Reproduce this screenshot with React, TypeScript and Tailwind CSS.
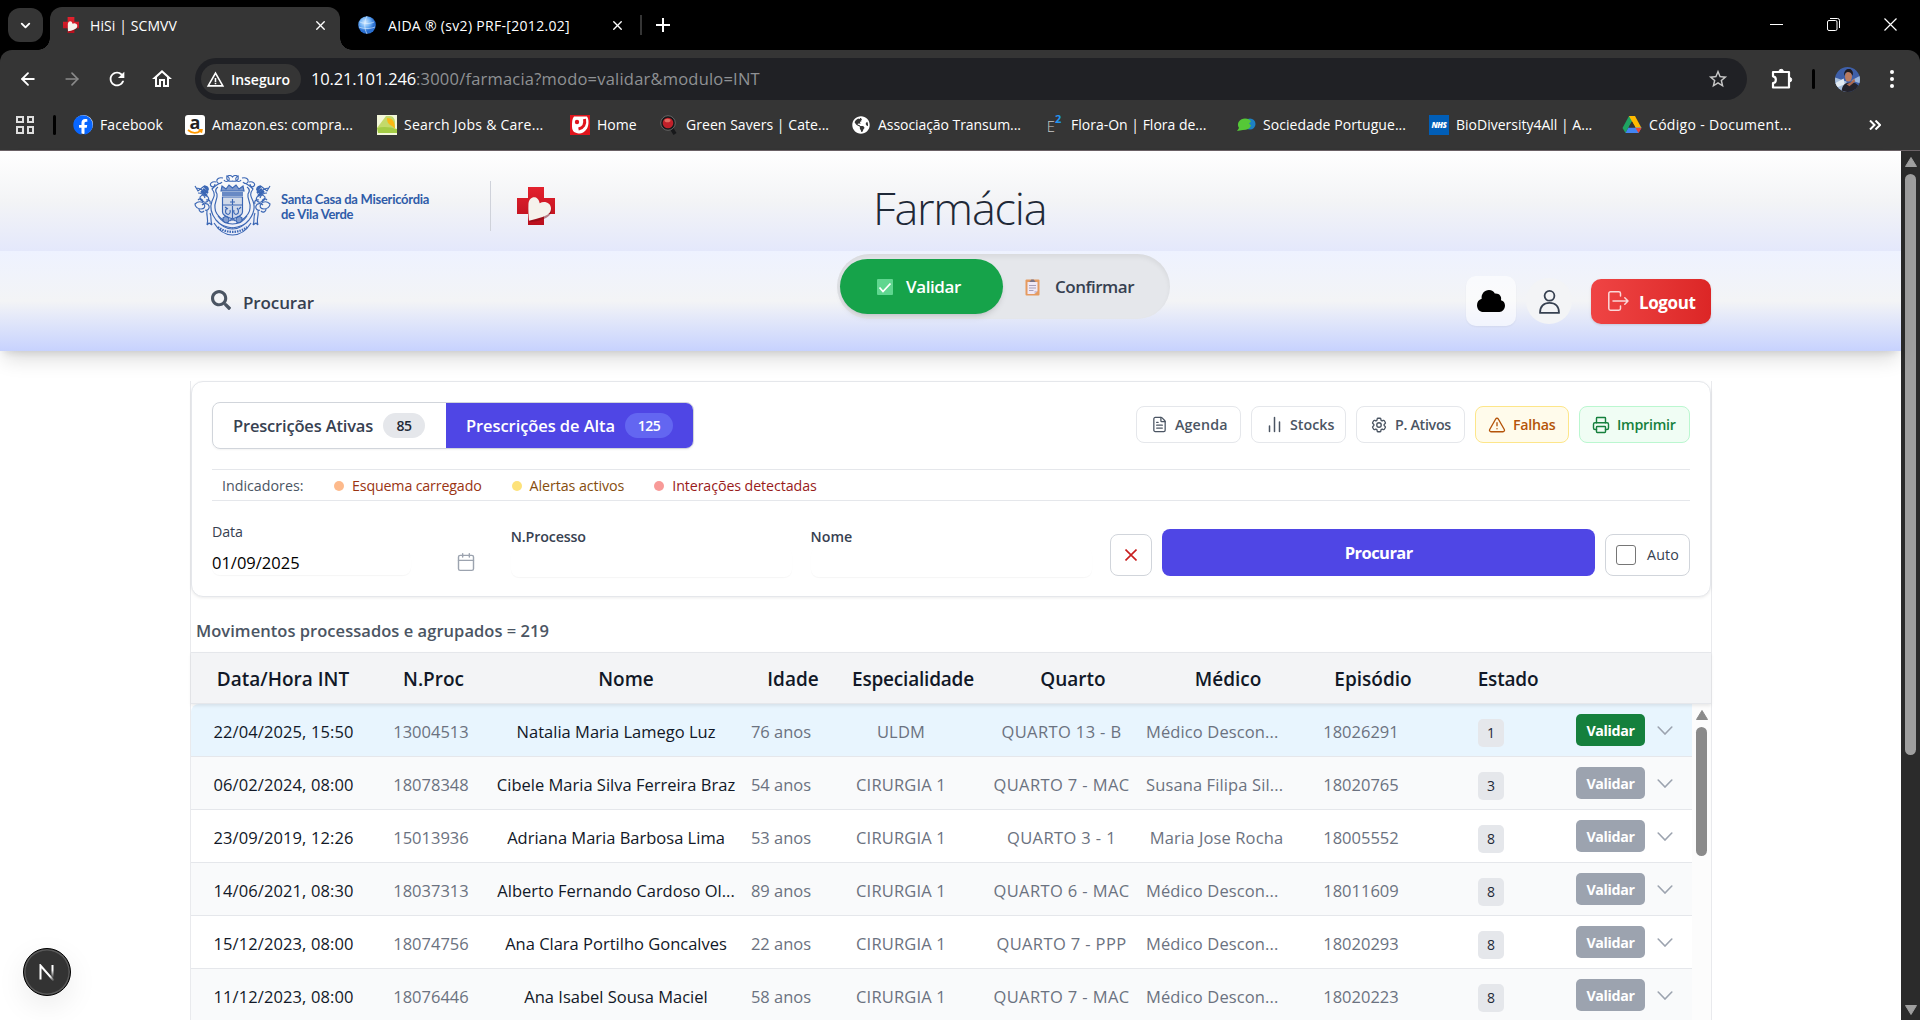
import React from "react";
import type { ReactNode } from "react";
import {
  ArrowLeft,
  ArrowRight,
  Calendar,
  ChevronDown,
  FileText,
  Printer,
  TriangleAlert,
  X,
} from "lucide-react";
import { FaFacebook, FaSearch, FaGlobeAmericas } from "react-icons/fa";
import { MdRefresh, MdOutlineHome, MdStarBorder, MdWarningAmber } from "react-icons/md";

/* ---------- logos ---------- */

function HeartCross({ className }: { className: string }) {
  return (
    <svg viewBox="0 0 38 38" className={className}>
      <defs>
        <linearGradient id="cross" x1="0" y1="0" x2="0" y2="1">
          <stop offset="0" stopColor="#e3222e" />
          <stop offset="1" stopColor="#b90f1d" />
        </linearGradient>
      </defs>
      <path d="M11 0h16v11h11v16H27v11H11V27H0V11h11z" fill="url(#cross)" />
      <path
        d="M12.500 35C12 30 11.500 25 11.500 19c0-8 9-10 11.500-2 5-2.500 11.500 0 11.500 6 0 5-4 7.500-9 9.500-4 1.500-8 2.500-14 2.500z"
        fill="#7d0a13"
        opacity=".5"
      />
      <path
        d="M12 33.800C11.500 28 11.200 23 11.400 17.500c.4-8.500 9.600-10 11.300-1.200 4.300-2.800 11.300-.8 11.300 5.200 0 4.500-3.500 6.800-8.500 8.500-4.500 1.500-9 2.800-13.500 3.800z"
        fill="#f5f2ec"
      />
    </svg>
  );
}

function Crest() {
  const side = (
    <g>
      <path d="M27 8c-4 1-6 3-9 6 4 5 2 8 0 12-3 8 0 14 4 19 3 4 8 7 17 8" />
      <path d="M24 12c-3 2-3 4-1 7 1 5-3 8-2 14 0 5 4 9 8 12" />
      <path d="M29 3c-4-1-7 1-6 4 1 2 4 2 5 0M22 7c-4-1-7 2-5 4 2 2 4 0 4-2M32 1c2 0 4 2 3 4s-4 2-5 0" />
      <path d="M2 13c5 0 8 3 10 7M4 18c3 0 6 2 7 5M1 11l3 5 5-4M6 22c2-3 6-3 8 0s-1 6-4 5-4-3-4-5z" />
      <path d="M1 29c3-3 7-3 9 0s0 5-3 5-6-2-6-5zM8 30c2-2 6-2 7 1s-2 5-4 4M4 25c2-2 5-1 5 2M12 25c3-1 5 1 4 4M5 34c0 3 3 4 5 2" />
      <path d="M13 36c-1 5 2 8 0 14M16 38c2 4 0 8 2 12M13 50l2-2 3 2M9 12c2-2 6 0 5 3s-4 3-5 1" />
      <path d="M9 14l5 4M7 16l6 5M10 11l4 4" strokeWidth="2.400" />
    </g>
  );
  return (
    <svg viewBox="0 0 77 61" className="h-[61px] w-[77px] shrink-0" fill="none" stroke="#3a66b4" strokeWidth="1.150">
      {side}
      <g transform="translate(77 0) scale(-1 1)">{side}</g>
      <path d="M33 2c1-2 4-2 5.500 0 1.500-2 4.500-2 5.500 0 1 3-2 5-5.500 4C35 7 32 5 33 2z" />
      <path d="M27 16l1-5 4 3 3-4 3.500 3 3.500-3 3 4 4-3 1 5z" fill="#3a66b4" fillOpacity=".65" />
      <path d="M28 18h21M28 20h21" strokeWidth="1.600" />
      <path d="M28.500 22h20v15c0 4-5 5-10 7-5-2-10-3-10-7z" fill="#3a66b4" fillOpacity=".18" />
      <path d="M28.500 30h20M38.500 24v6M36 27h5M33 33c-2 2-2 5 0 6s4-1 3-4M43 33c2 2 2 5 0 6s-4-1-3-4M31 32l3 2M45 34l2-2M38.500 31v12" />
      <path d="M24 41c4 6 9 8 14.500 8S49 47 53 41M22 45c5 6 10 9 16.500 9S50 51 55 45" />
      <path d="M20 48c5 8 11 12 18.500 12S52 56 57 48" />
      <path d="M24 52c8 6.500 21 6.500 29 0" strokeWidth="2.200" strokeDasharray="1.500 1" />
      <path d="M29 43c3-3 6-1 6 2s-4 4-6 1zM48 43c-3-3-6-1-6 2s4 4 6 1zM36 46c1-3 4-3 5 0" fill="#3a66b4" fillOpacity=".6" />
    </svg>
  );
}

/* ---------- browser ---------- */

function TabStrip() {
  return (
    <div className="flex h-[50px] shrink-0 bg-black">
      <div className="mt-2 ml-2 flex h-[34px] w-[35px] items-center justify-center rounded-xl bg-[#353535]">
        <ChevronDown size={15} strokeWidth={3} className="text-white" />
      </div>
      <div className="relative mt-[7px] ml-[7px] flex h-[43px] w-[290px] items-center rounded-t-[12px] bg-[#353535] pr-[12px] pb-[7px] pl-[13px]">
        <HeartCross className="size-4" />
        <span className="ml-[11px] text-[14px] tracking-[0.100px] text-white">HiSi | SCMVV</span>
        <X size={15} strokeWidth={2.200} className="ml-auto text-white" />
        <span className="absolute bottom-0 left-[-12px] size-3 bg-[radial-gradient(circle_at_0_0,transparent_11.500px,#353535_12px)]" />
        <span className="absolute right-[-12px] bottom-0 size-3 bg-[radial-gradient(circle_at_100%_0,transparent_11.500px,#353535_12px)]" />
      </div>
      <div className="ml-[18px] flex h-[50px] items-center">
        <svg viewBox="0 0 18 18" className="size-[18px]">
          <defs>
            <radialGradient id="globe" cx=".4" cy=".35">
              <stop offset="0" stopColor="#d5ebff" />
              <stop offset=".6" stopColor="#6eb0f5" />
              <stop offset="1" stopColor="#2a6fd0" />
            </radialGradient>
          </defs>
          <circle cx="9" cy="9" r="8.800" fill="url(#globe)" />
          <path d="M2 6c4 2 10 2 14 0M9 0c-3 6-3 12 0 18M1 11c5 2 11 2 16 0" stroke="#e6f3ff" fill="none" strokeWidth=".6" />
        </svg>
        <span className="ml-[12px] w-[224px] text-[14px] tracking-[0.310px] whitespace-nowrap text-white">AIDA ® (sv2) PRF-[2012.02]</span>
        <X size={15} strokeWidth={2.200} className="ml-[-2px] text-white" />
        <span className="ml-[15px] h-5 w-[2px] bg-[#353535]" />
        <svg viewBox="0 0 14 14" className="ml-[14px] size-[14px]" stroke="white" strokeWidth="2">
          <path d="M7 0v14M0 7h14" />
        </svg>
      </div>
      <div className="ml-auto flex h-[48px] items-center gap-[44px] pr-[23px]">
        <span className="h-px w-[13px] bg-white" />
        <svg viewBox="0 0 13 13" className="size-[13px]" fill="none" stroke="white">
          <rect x=".5" y="2.500" width="9.500" height="10" rx="1.500" />
          <path d="M3 .5h7.500a2 2 0 0 1 2 2V10" />
        </svg>
        <svg viewBox="0 0 13 13" className="size-[13px]" stroke="white" strokeWidth="1.200">
          <path d="M.5.500l12 12M12.500.500l-12 12" />
        </svg>
      </div>
    </div>
  );
}

function Toolbar() {
  return (
    <div className="flex h-[58px] shrink-0 items-center rounded-t-[12px] bg-[#353535] text-white">
      <ArrowLeft size={20} strokeWidth={2.200} className="ml-[18px]" />
      <ArrowRight size={20} strokeWidth={2} className="ml-[24px] text-[#8a8a8a]" />
      <MdRefresh size={22} className="ml-[24px]" />
      <MdOutlineHome size={24} className="ml-[22px]" />
      <div className="ml-[21px] flex h-[42px] w-[1552px] items-center rounded-full bg-[#202125] pr-[18px] pl-[6px]">
        <div className="flex h-[30px] w-[100px] items-center rounded-full bg-[#353535] pl-[5px]">
          <MdWarningAmber size={19} />
          <span className="ml-[6px] text-[14px] font-semibold tracking-[-0.040px]">Inseguro</span>
        </div>
        <span className="ml-[10px] text-[16.500px] tracking-[-0.180px]">10.21.101.246</span>
        <span className="text-[16.500px] tracking-[0.210px] text-[#8f9194]">:3000/farmacia?modo=validar&modulo=INT</span>
        <MdStarBorder size={22} className="ml-auto text-[#c7c7c7]" />
      </div>
      <svg viewBox="0 0 22 22" className="ml-[24px] size-[22px]" fill="none" stroke="white" strokeWidth="2.200" strokeLinejoin="round">
        <path d="M2 4h16v15.500H2v-4.300c3.800-.4 3.800-6.500 0-6.900z" />
        <path d="M8 3.500a2.200 2.200 0 0 1 4.400 0zM18.500 9.500a2.200 2.200 0 0 1 0 4.400z" fill="white" strokeWidth="1" />
      </svg>
      <span className="ml-[19px] h-5 w-[3px] rounded-full bg-black" />
      <svg viewBox="0 0 26 26" className="ml-[20px] size-[25px]">
        <clipPath id="face">
          <circle cx="13" cy="13" r="13" />
        </clipPath>
        <g clipPath="url(#face)">
          <path d="M0 0h26v26H0z" fill="#3e5fa8" />
          <path d="M0 11l12 4v11H0z" fill="#a9bfdb" />
          <path d="M0 17l9-5 1 6-10 4z" fill="#e3ebf3" />
          <path d="M17 14l9-5v8z" fill="#9db7dc" />
          <path d="M7 26c0-7 4-10 8-9.500 6-1.500 11 2 11 9.500z" fill="#23222b" />
          <ellipse cx="14" cy="10" rx="3.600" ry="5.200" fill="#b97b60" />
          <path d="M9.500 9C9 3 13 1.500 15.500 2.200s4 4 2.700 7c-1-3-2.700-4-4.700-4s-3 1-3.500 3.500z" fill="#1f1a1d" />
          <path d="M12 18l4-2 4-4 1 3-6 5z" fill="#a96a52" />
        </g>
      </svg>
      <div className="ml-[30px] flex flex-col gap-[3px]">
        <span className="size-1 rounded-full bg-white" />
        <span className="size-1 rounded-full bg-white" />
        <span className="size-1 rounded-full bg-white" />
      </div>
    </div>
  );
}

function Bookmark({ icon, label, className }: { icon: ReactNode; label: string; className: string }) {
  return (
    <div className={`flex shrink-0 items-center whitespace-nowrap ${className}`}>
      <span className="mr-[7px] flex w-5 shrink-0 justify-center">{icon}</span>
      {label}
    </div>
  );
}

function Bookmarks() {
  return (
    <div className="flex h-[42px] shrink-0 items-center bg-[#353535] pb-[9px] text-[14px] text-white">
      <div className="ml-[16px] grid w-[18px] grid-cols-2 gap-[3px]">
        {[0, 1, 2, 3].map((i) => (
          <span key={i} className="size-[7.500px] border-2 border-[#dedede]" />
        ))}
      </div>
      <span className="ml-[19px] h-5 w-[3px] rounded-full bg-black" />
      <Bookmark
        className="ml-[17px] w-[112px] tracking-[0.080px]"
        label="Facebook"
        icon={
          <span className="flex size-[19px] items-center justify-center rounded-full bg-white">
            <FaFacebook size={20} className="shrink-0 text-[#0866ff]" />
          </span>
        }
      />
      <Bookmark
        className="w-[192px] tracking-[0.060px]"
        label="Amazon.es: compra..."
        icon={
          <span className="relative flex size-5 justify-center rounded-[3px] bg-white">
            <span className="mt-[-5px] text-[18px] leading-[24px] font-bold text-[#221f1f]">a</span>
            <svg viewBox="0 0 16 5" className="absolute bottom-[1px] h-[5px] w-[16px]" fill="none" stroke="#ff9900" strokeWidth="1.800">
              <path d="M1 1c4 3.500 9 3.500 13 .5M11.500.800l3.300 0-.6 3" />
            </svg>
          </span>
        }
      />
      <Bookmark
        className="w-[193px] tracking-[0.260px]"
        label="Search Jobs & Care..."
        icon={
          <svg viewBox="0 0 20 20" className="size-5">
            <path d="M0 0h20v20H0z" fill="#f3f7d9" />
            <path d="M0 13L9 1h4c3 0 5 3 5 6v6z" fill="#c3da6a" />
            <path d="M0 13c6-2 14-1 20 1v4H1z" fill="#a4cc45" />
            <path d="M10 3c5 0 8 3 8 11-3-5-8-3-8-11z" fill="#fbb815" />
          </svg>
        }
      />
      <Bookmark
        className="w-[89px] tracking-[0.050px]"
        label="Home"
        icon={
          <svg viewBox="0 0 20 20" className="size-5">
            <path d="M0 0h20v20H0z" fill="#e0141c" />
            <path d="M4 1.500h13c2 3 2 8 0 12-2 3-4 4.500-7 5-5 0-8-2-8-7C2 7 2 4 4 1.500z" fill="#fff" />
            <circle cx="7" cy="7" r="2.200" fill="#e0141c" />
            <path d="M14.500 4c1 5-1 9-6 10" stroke="#e0141c" strokeWidth="3" fill="none" />
          </svg>
        }
      />
      <Bookmark
        className="w-[192px] tracking-[0.050px]"
        label="Green Savers | Cate..."
        icon={
          <svg viewBox="0 0 20 20" className="size-5">
            <path d="M11 11l5 8" stroke="#17181a" strokeWidth="3.500" />
            <circle cx="9" cy="8" r="7.300" fill="#17181a" stroke="#666" />
            <circle cx="9" cy="8" r="5.300" fill="#c0202a" />
            <ellipse cx="8.500" cy="5.500" rx="3" ry="1.800" fill="#e26b60" />
          </svg>
        }
      />
      <Bookmark
        className="w-[193px] tracking-[-0.060px]"
        label="Associação Transum..."
        icon={<FaGlobeAmericas size={18} />}
      />
      <Bookmark
        className="w-[192px]"
        label="Flora-On | Flora de..."
        icon={
          <span className="mt-[3px] flex items-start text-[15px] leading-5 font-light text-[#c8c8c8]">
            E<span className="mt-[-2px] text-[11px] leading-[9px] font-bold text-[#2196f3]">2</span>
          </span>
        }
      />
      <Bookmark
        className="w-[193px] tracking-[0.060px]"
        label="Sociedade Portugue..."
        icon={
          <svg viewBox="0 0 20 20" className="size-5">
            <ellipse cx="14" cy="9" rx="5.500" ry="5.500" fill="#1d81c4" />
            <path d="M1 16l2-3C0 8 4 3.500 9 3.500c3 0 5 1 6 3l-2 2 2 2c-1 3-4 4.500-8 4.500z" fill="#55c837" />
          </svg>
        }
      />
      <Bookmark
        className="w-[193px]"
        label="BioDiversity4All | A..."
        icon={
          <span className="flex size-5 items-center justify-center bg-[#005eb8] text-[8px] font-extrabold tracking-[-0.500px] italic">NHS</span>
        }
      />
      <Bookmark
        className="w-[247px] tracking-[0.310px]"
        label="Código - Document..."
        icon={
          <svg viewBox="0 0 20 18" className="h-[18px] w-5">
            <path d="M7 0h6l-6.500 11.500L3.500 17 .5 12z" fill="#1ea362" />
            <path d="M7 0h6l6.500 12h-6z" fill="#ffba00" />
            <path d="M6.500 11.500h13L16.500 17h-13z" fill="#4285f4" />
            <path d="M13.500 12h6l-3 5z" fill="#ea4335" />
            <path d="M10 5.500l-3.500 6h7z" fill="#353535" />
          </svg>
        }
      />
      <svg viewBox="0 0 12 10" className="h-[10px] w-3" fill="none" stroke="white" strokeWidth="2">
        <path d="M1 .5l4.500 4.500L1 9.500M6.500.500L11 5l-4.500 4.500" />
      </svg>
    </div>
  );
}

/* ---------- page header ---------- */

function PageHeader() {
  return (
    <header className="shrink-0 shadow-[0_12px_19px_-4px_rgba(0,0,0,0.14),0_5px_8px_-4px_rgba(0,0,0,0.12)]">
      <div className="grid h-[100px] grid-cols-[873px_1fr] bg-linear-to-b from-white via-[#f3f4f6] to-[#e4e8fb]">
        <div className="flex h-full items-start pl-[194px]">
          <div className="mt-[24px]">
            <Crest />
          </div>
          <div className="mt-[41px] ml-[10px] w-[209px] font-['Lato'] text-[13px] leading-[15px] font-bold tracking-[-0.270px] text-[#2f5ca9]">
            Santa Casa da Misericórdia
            <br />
            de Vila Verde
          </div>
          <span className="mt-[30px] h-[50px] w-px bg-[#cfd2da]" />
          <HeartCross className="mt-[36px] ml-[26px] size-[38px]" />
        </div>
        <h1 className="pt-[26px] text-[45px] leading-[62px] font-light tracking-[-1.200px] text-[#1f2937]">Farmácia</h1>
      </div>
      <div className="flex h-[100px] items-start bg-linear-to-b from-[#eef2ff] via-[#f3f4f6] to-[#c7d2fe]">
        <div className="mt-[38px] ml-[211px] flex h-[26px] w-[626px] items-center">
          <FaSearch size={20} className="mb-1 text-[#4b5563]" />
          <span className="ml-[12px] pt-[2px] text-[17px] font-semibold tracking-[-0.120px] text-[#374151]">Procurar</span>
        </div>
        <div className="mt-[3px] flex h-[65px] w-[333px] rounded-full bg-[#e5e7eb] pt-[5px] pl-[3px] shadow-[inset_0_3px_5px_rgba(0,0,0,0.06)]">
          <div className="flex h-[55px] w-[163px] items-center rounded-full bg-[#16a34a] pt-[1px] pl-[37px] text-[17px] font-semibold tracking-[-0.390px] text-white shadow-md">
            <svg viewBox="0 0 16 16" className="mr-[13px] size-4">
              <rect width="16" height="16" rx="1" fill="#5fd68f" />
              <path d="M2.500 8.500l3.500 4L13.500 4.500" fill="none" stroke="white" strokeWidth="1.800" />
            </svg>
            Validar
          </div>
          <div className="flex h-[55px] items-center pt-[1px] pl-[22px] text-[17px] font-semibold tracking-[-0.510px] text-[#374151]">
            <svg viewBox="0 0 15 17" className="mr-[15px] h-[17px] w-[15px]">
              <rect x=".5" y=".5" width="14" height="16" rx="1" fill="#e59a5f" />
              <path d="M2.500 3h10v9l-3 3h-7z" fill="#efe8f5" />
              <path d="M9.500 15l3-3h-3z" fill="#c9bfd6" />
              <path d="M4.500 3c0-1.500 1.500-1 1.800-2.500h2.400C9 2 10.500 1.500 10.500 3z" fill="#7b7486" />
              <path d="M4 6.500h7M4 9h7M4 11.500h4.500" stroke="#a79fb8" />
            </svg>
            Confirmar
          </div>
        </div>
        <div className="mt-[25px] ml-[296px] flex items-center">
          <div className="flex size-[50px] items-center justify-center rounded-[10px] bg-white/60 shadow-[0_1px_2px_rgba(0,0,0,0.05)]">
            <svg viewBox="0 0 28 22" className="h-[22px] w-[28px]">
              <path d="M5.500 22C2.500 21.800 0 19 0 15.300 0 12 1.800 9.500 4.700 8.700 4 4 7.500 0 12 0c2.800 0 4.800 1.300 5.800 3.500 4.200-.5 7.200 2.500 6.200 6.700C26.500 10.700 28 12.800 28 15.500c0 3.500-2.500 6.300-5.500 6.500z" />
            </svg>
          </div>
          <div className="ml-[10px] flex size-[46px] items-center justify-center rounded-full bg-[#f3f4f6]">
            <svg viewBox="0 0 21 24" className="mt-[2px] h-[24px] w-[21px]" fill="none" stroke="#374151" strokeWidth="1.800" strokeLinejoin="round">
              <circle cx="10.500" cy="5.800" r="4.900" />
              <path d="M1 22.900c0-6.500 3.800-10 9.500-10s9.500 3.500 9.500 10z" />
            </svg>
          </div>
          <div className="ml-[19px] flex h-[45px] w-[120px] items-center rounded-[10px] bg-linear-to-r from-[#ef4444] to-[#dc2626] text-[17px] font-bold tracking-[-0.400px] text-white shadow-sm">
            <svg viewBox="0 0 21 20" className="mr-[10px] ml-[17px] h-5 w-[21px]" fill="none" stroke="white" strokeOpacity=".8" strokeWidth="1.500" strokeLinecap="round" strokeLinejoin="round">
              <path d="M12.500 5V2.500a1.700 1.700 0 0 0-1.700-1.700H2.500A1.700 1.700 0 0 0 .8 2.500v15a1.700 1.700 0 0 0 1.700 1.700h8.300a1.700 1.700 0 0 0 1.700-1.700V15M5 10h15M16.800 6.800L20 10l-3.200 3.200" />
            </svg>
            <span className="pt-[3px]">Logout</span>
          </div>
        </div>
      </div>
    </header>
  );
}

/* ---------- filter card ---------- */

function ActionButton({ icon, label, className }: { icon: ReactNode; label: string; className: string }) {
  return (
    <div className={`flex h-[37px] items-center rounded-lg border text-[14.250px] font-semibold whitespace-nowrap ${className}`}>
      {icon}
      <span className="ml-[7px] pt-[1px]">{label}</span>
    </div>
  );
}

function Indicator({ dot, text, label }: { dot: string; text: string; label: string }) {
  return (
    <div className={`flex items-center ${text}`}>
      <span className={`mr-[8px] size-[10px] rounded-full ${dot}`} />
      {label}
    </div>
  );
}

function FilterCard() {
  return (
    <section className="h-[216px] rounded-[12px] border border-[#e5e7eb] bg-white px-[20px] pt-[20px] shadow-[0_1px_3px_rgba(0,0,0,0.08)]">
      <div className="flex items-start justify-between">
        <div className="flex h-[47px] w-[482px] overflow-hidden rounded-lg border border-[#d1d5db] text-[16.500px] font-semibold shadow-[0_1px_2px_rgba(0,0,0,0.05)]">
          <div className="flex w-[233px] items-center pl-[20px] tracking-[-0.180px] text-[#374151]">
            <span className="pt-[1px]">Prescrições Ativas</span>
            <span className="ml-[10px] flex h-[25px] w-[42px] items-center justify-center rounded-full bg-[#e5e7eb] text-[14px] tracking-[-0.500px] text-[#1f2937]">85</span>
          </div>
          <div className="flex flex-1 items-center bg-[#4f46e5] pl-[20px] tracking-[-0.080px] text-white">
            <span className="pt-[1px]">Prescrições de Alta</span>
            <span className="ml-[10px] flex h-[25px] w-[48px] items-center justify-center rounded-full bg-[#6366f1] text-[14px] tracking-[-0.600px]">125</span>
          </div>
        </div>
        <div className="mt-[4px] flex gap-[10px] text-[#4b5563]">
          <ActionButton className="w-[105px] border-[#e5e7eb] pl-[14px] tracking-[0.150px]" label="Agenda" icon={<FileText size={17} strokeWidth={1.800} />} />
          <ActionButton
            className="w-[95px] border-[#e5e7eb] pl-[14px]"
            label="Stocks"
            icon={
              <svg viewBox="0 0 17 17" className="size-[17px]" stroke="currentColor" strokeWidth="1.500">
                <path d="M3.500 10v5.500M8.500 1.500v14M13.500 6v9.500" strokeLinecap="round" />
              </svg>
            }
          />
          <ActionButton
            className="w-[109px] border-[#e5e7eb] pl-[13px] tracking-[-0.300px]"
            label="P. Ativos"
            icon={
              <svg viewBox="0 0 24 24" className="size-[18px]" fill="none" stroke="currentColor" strokeWidth="1.800" strokeLinejoin="round">
                <path d="M9.594 3.940c.09-.542.560-.940 1.110-.940h2.593c.550 0 1.020.398 1.110.940l.213 1.281c.063.374.313.686.645.870.074.040.147.083.220.127.324.196.720.257 1.075.124l1.217-.456a1.125 1.125 0 0 1 1.370.490l1.296 2.247a1.125 1.125 0 0 1-.260 1.431l-1.003.827c-.293.240-.438.613-.431.992a6.759 6.759 0 0 1 0 .255c-.007.378.138.750.430.990l1.005.828c.424.350.534.954.260 1.430l-1.298 2.247a1.125 1.125 0 0 1-1.369.491l-1.217-.456c-.355-.133-.750-.072-1.076.124a6.570 6.570 0 0 1-.220.128c-.331.183-.581.495-.644.869l-.213 1.280c-.090.543-.560.941-1.110.941h-2.594c-.550 0-1.020-.398-1.110-.940l-.213-1.281c-.062-.374-.312-.686-.644-.870a6.520 6.520 0 0 1-.220-.127c-.325-.196-.720-.257-1.076-.124l-1.217.456a1.125 1.125 0 0 1-1.369-.490l-1.297-2.247a1.125 1.125 0 0 1 .260-1.431l1.004-.827c.292-.240.437-.613.430-.992a6.932 6.932 0 0 1 0-.255c.007-.378-.138-.750-.430-.990l-1.004-.828a1.125 1.125 0 0 1-.260-1.430l1.297-2.247a1.125 1.125 0 0 1 1.370-.491l1.216.456c.356.133.751.072 1.076-.124.072-.044.146-.087.220-.128.332-.183.582-.495.644-.869l.214-1.281z" />
                <circle cx="12" cy="12" r="3" />
              </svg>
            }
          />
          <ActionButton className="w-[94px] border-[#fde68a] bg-[#fffbeb] pl-[12px] tracking-[-0.300px] text-[#b45309]" label="Falhas" icon={<TriangleAlert size={18} strokeWidth={1.800} />} />
          <ActionButton className="w-[111px] border-[#bbf7d0] bg-[#f0fdf4] pl-[12px] tracking-[-0.250px] text-[#15803d]" label="Imprimir" icon={<Printer size={18} strokeWidth={1.900} />} />
        </div>
      </div>
      <div className="mt-[20px] flex h-[32px] items-center border-y border-[#e5e7eb] pt-[1px] pl-[10px] text-[14.250px] whitespace-nowrap">
        <span className="w-[112px] font-medium text-[#4b5563]">Indicadores:</span>
        <div className="flex gap-[30px]">
          <Indicator dot="bg-[#fdba8c]" text="tracking-[-0.160px] text-[#9a3412]" label="Esquema carregado" />
          <Indicator dot="bg-[#fde27a]" text="tracking-[-0.080px] text-[#854d0e]" label="Alertas activos" />
          <Indicator dot="bg-[#f89a98]" text="tracking-[-0.100px] text-[#991b1b]" label="Interações detectadas" />
        </div>
      </div>
      <div className="flex items-start text-[14.250px] font-semibold text-[#374151]">
        <div className="w-[299px] pt-[20px] tracking-[-0.100px]">
          <div className="font-medium">Data</div>
          <div className="flex items-center">
            <div className="mt-[9px] flex h-[24px] w-[199px] items-center rounded-[8px] text-[16.500px] font-normal tracking-normal text-black shadow-[0_1px_1px_rgba(0,0,0,0.04)]">
              01/09/2025
            </div>
            <Calendar size={20} strokeWidth={1.700} className="mt-[6px] ml-[45px] text-[#9ca3af]" />
          </div>
        </div>
        <div className="w-[300px] pt-[25px] tracking-[-0.150px]">
          N.Processo
          <div className="h-[30px] w-[281px] rounded-[8px] shadow-[0_1px_1px_rgba(0,0,0,0.04)]" />
        </div>
        <div className="w-[300px] pt-[25px]">
          Nome
          <div className="h-[30px] w-[281px] rounded-[8px] shadow-[0_1px_1px_rgba(0,0,0,0.04)]" />
        </div>
        <div className="mt-[33px] flex h-[42px] w-[42px] items-center justify-center rounded-lg border border-[#d1d5db] text-[#c81e1e]">
          <svg viewBox="0 0 12 12" className="size-3" stroke="currentColor" strokeWidth="1.600">
            <path d="M.5.500l11 11M11.500.500l-11 11" />
          </svg>
        </div>
        <div className="mt-[28px] ml-[10px] flex h-[47px] w-[433px] items-center justify-center rounded-lg bg-[#4f46e5] pt-[1px] text-[16.500px] font-bold tracking-[-0.540px] text-white">
          Procurar
        </div>
        <div className="mt-[33px] ml-[10px] flex h-[42px] w-[85px] items-center rounded-lg border border-[#d1d5db] pl-[10px] text-[14.250px] font-normal tracking-[0.150px]">
          <span className="mr-[11px] size-[20px] rounded-[3px] border-[1.500px] border-[#767676] bg-white" />
          Auto
        </div>
      </div>
    </section>
  );
}

/* ---------- movements table ---------- */

type Movement = [date: string, proc: string, name: string, age: string, unit: string, room: string, doctor: string, episode: string, state: string];

const movements: Movement[] = [
  ["22/04/2025, 15:50", "13004513", "Natalia Maria Lamego Luz", "76 anos", "ULDM", "QUARTO 13 - B", "Médico Descon...", "18026291", "1"],
  ["06/02/2024, 08:00", "18078348", "Cibele Maria Silva Ferreira Braz", "54 anos", "CIRURGIA 1", "QUARTO 7 - MAC", "Susana Filipa Sil...", "18020765", "3"],
  ["23/09/2019, 12:26", "15013936", "Adriana Maria Barbosa Lima", "53 anos", "CIRURGIA 1", "QUARTO 3 - 1", "Maria Jose Rocha", "18005552", "8"],
  ["14/06/2021, 08:30", "18037313", "Alberto Fernando Cardoso Ol...", "89 anos", "CIRURGIA 1", "QUARTO 6 - MAC", "Médico Descon...", "18011609", "8"],
  ["15/12/2023, 08:00", "18074756", "Ana Clara Portilho Goncalves", "22 anos", "CIRURGIA 1", "QUARTO 7 - PPP", "Médico Descon...", "18020293", "8"],
  ["11/12/2023, 08:00", "18076446", "Ana Isabel Sousa Maciel", "58 anos", "CIRURGIA 1", "QUARTO 7 - MAC", "Médico Descon...", "18020223", "8"],
];

function Row({ data, index }: { data: Movement; index: number }) {
  const [date, proc, name, age, unit, room, doctor, episode, state] = data;
  const tone = index === 0 ? "bg-[#e8f5fe]" : index % 2 ? "bg-[#f9fafb]" : "bg-white";
  return (
    <div
      className={`grid h-[53px] grid-cols-[185px_110px_260px_70px_170px_151px_159px_130px_130px_1fr] items-center border-b border-[#e5e7eb] pt-[5px] text-center text-[16.500px] whitespace-nowrap text-[#6b7280] ${tone}`}
    >
      <span className="tracking-[0.100px] text-[#111827]">{date}</span>
      <span>{proc}</span>
      <span className="text-[#111827]">{name}</span>
      <span>{age}</span>
      <span className="tracking-[0.180px]">{unit}</span>
      <span className="tracking-[0.380px]">{room}</span>
      <span className={`px-[9px] tracking-[0.120px] ${doctor.endsWith("...") ? "text-left" : ""}`}>{doctor}</span>
      <span>{episode}</span>
      <span className="flex justify-center">
        <span className="flex h-[28px] w-[26px] items-center justify-center rounded-[5px] bg-[#e5e7eb] text-[14px] text-[#1f2937]">{state}</span>
      </span>
      <div className="flex items-center pb-[5px] pl-5">
        <span
          className={`flex h-[32px] w-[69px] items-center justify-center rounded-[5px] pt-[1px] text-[14.250px] font-bold tracking-[-0.380px] text-white ${index === 0 ? "bg-[#15803d]" : "bg-[#9ca3af]"}`}
        >
          Validar
        </span>
        <svg viewBox="0 0 16 9" className="ml-[12px] h-[9px] w-4" fill="none" stroke="#9ca3af" strokeWidth="1.600" strokeLinecap="round">
          <path d="M1.200 1L8 8l6.800-7" />
        </svg>
      </div>
    </div>
  );
}

function MovementsTable() {
  return (
    <div className="flex min-h-0 flex-1 flex-col">
      <div className="relative z-10 grid h-[52px] shrink-0 grid-cols-[184px_117px_268px_66px_174px_146px_164px_126px_144px_1fr] items-center border-y border-[#e5e7eb] bg-[#f3f4f6] pt-[2px] text-center text-[19px] font-semibold text-[#111827] shadow-[0_2px_3px_rgba(0,0,0,0.08)]">
        <span>Data/Hora INT</span>
        <span>N.Proc</span>
        <span>Nome</span>
        <span>Idade</span>
        <span className="tracking-[-0.200px]">Especialidade</span>
        <span>Quarto</span>
        <span>Médico</span>
        <span>Episódio</span>
        <span className="tracking-[-0.200px]">Estado</span>
      </div>
      <div className="flex min-h-0 flex-1 overflow-hidden rounded-tl-[8px]">
        <div className="w-[1501px] shrink-0">
          {movements.map((m, i) => (
            <Row key={m[1]} data={m} index={i} />
          ))}
        </div>
        <div className="flex flex-1 flex-col items-center bg-[#fcfcfc] pt-[6px]">
          <svg viewBox="0 0 12 10" className="h-[10px] w-3">
            <path d="M6 .5L11.500 9.500H.5z" fill="#8a8a8a" stroke="#8a8a8a" strokeLinejoin="round" />
          </svg>
          <span className="mt-[7px] h-[129px] w-[11px] rounded-full bg-[#8a8a8a]" />
        </div>
      </div>
    </div>
  );
}

function PageScrollbar() {
  return (
    <div className="flex w-[19px] shrink-0 flex-col items-center bg-[#2b2b2b] pt-[6px]">
      <svg viewBox="0 0 12 10" className="h-[10px] w-3">
        <path d="M6 .5L11.500 9.500H.5z" fill="#9f9f9f" stroke="#9f9f9f" strokeLinejoin="round" />
      </svg>
      <span className="mt-[7px] h-[581px] w-[11px] rounded-full bg-[#9f9f9f]" />
      <svg viewBox="0 0 12 10" className="mt-auto mb-[5px] h-[10px] w-3">
        <path d="M6 9.500L11.500.500H.5z" fill="#9f9f9f" stroke="#9f9f9f" strokeLinejoin="round" />
      </svg>
    </div>
  );
}

export default function App() {
  return (
    <div className="flex h-[1020px] w-[1920px] flex-col overflow-hidden bg-black font-['Open_Sans',sans-serif]">
      <TabStrip />
      <Toolbar />
      <Bookmarks />
      <div className="flex min-h-0 flex-1 border-t border-[#6b6266]">
        <main className="relative flex w-[1901px] shrink-0 flex-col bg-white">
          <PageHeader />
          <div className="mt-[30px] ml-[190px] flex min-h-0 w-[1522px] flex-1 flex-col border-x border-[#e9eaed]">
            <FilterCard />
            <div className="flex h-[55px] shrink-0 items-center pt-[13px] pl-[5px] text-[16.500px] font-semibold tracking-[0.040px] text-[#4b5563]">
              Movimentos processados e agrupados = 219
            </div>
            <MovementsTable />
          </div>
          <div className="absolute bottom-6 left-[23px] flex size-12 items-center justify-center rounded-full border border-black bg-[#333] shadow-[inset_0_0_0_1.500px_#5a5a5a,0_10px_30px_rgba(0,0,0,0.08)]">
            <svg viewBox="0 0 16 17" className="h-[17px] w-4" fill="none" strokeWidth="2">
              <defs>
                <linearGradient id="nfade" x1="0" y1="0" x2="0" y2="1">
                  <stop offset=".4" stopColor="#fff" />
                  <stop offset="1" stopColor="#fff" stopOpacity="0" />
                </linearGradient>
                <linearGradient id="ndiag" x1="0" y1="0" x2="1" y2="1">
                  <stop offset=".7" stopColor="#fff" />
                  <stop offset="1" stopColor="#fff" stopOpacity="0" />
                </linearGradient>
              </defs>
              <path d="M1.500 15.500V1.500L15 17" stroke="url(#ndiag)" />
              <rect x="12.500" y="1" width="2" height="13" fill="url(#nfade)" />
            </svg>
          </div>
        </main>
        <PageScrollbar />
      </div>
    </div>
  );
}
